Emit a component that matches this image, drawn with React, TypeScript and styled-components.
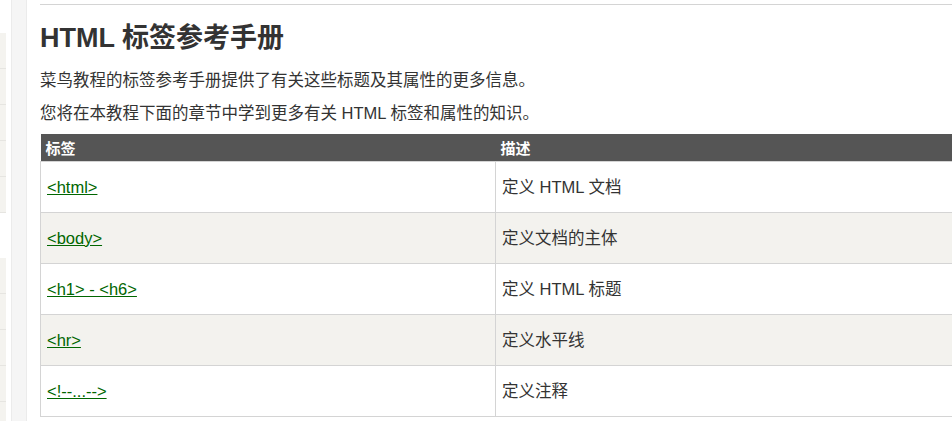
import React from 'react';
import styled, { createGlobalStyle } from 'styled-components';

const TEXT_COLOR = '#333333';
const BORDER_COLOR = '#d4d4d4';
const STRIPE_COLOR = '#f3f2ee';
const LINK_COLOR = '#006600';

const GlobalStyle = createGlobalStyle`
  html, body {
    margin: 0;
    padding: 0;
    background: #ffffff;
    overflow: hidden;
  }

  body {
    font-family: 'Liberation Sans', Arial, 'Noto Sans CJK SC', sans-serif;
    color: ${TEXT_COLOR};
  }
`;

const Page = styled.div`
  display: flex;
  align-items: flex-start;
  width: 952px;
  height: 421px;
  overflow: hidden;
`;

const SideMenu = styled.div`
  display: flex;
  flex-direction: column;
  gap: 45px;
  width: 6px;
  padding-top: 33px;
  flex-shrink: 0;
`;

const MenuGroup = styled.ul`
  list-style: none;
  margin: 0;
  padding: 0;
`;

const MenuItem = styled.li`
  height: 35px;
  background: #f4f3ef;
  border-bottom: 1px solid #e6e5e1;
`;

const Gutter = styled.div`
  width: 14px;
  height: 421px;
  margin-left: 5px;
  flex-shrink: 0;
  background: #f5f5f5;
  border-left: 1px solid #ebebeb;
  border-right: 1px solid #ebebeb;
`;

const Main = styled.main`
  flex: 1;
  min-width: 0;
  margin-left: 13px;
  margin-top: 4px;
  border-top: 1px solid ${BORDER_COLOR};
  overflow: hidden;
`;

const Title = styled.h1`
  margin: 15px 0 12px;
  font-size: 27px;
  line-height: 36px;
  font-weight: bold;
  color: ${TEXT_COLOR};
`;

const Paragraph = styled.p`
  margin: 0 0 9px;
  font-size: 16.5px;
  line-height: 24px;
`;

const RefTable = styled.table`
  width: 960px;
  border-collapse: collapse;
  font-size: 16.5px;
`;

const HeadCell = styled.th<{ $width?: number }>`
  width: ${p => (p.$width ? `${p.$width}px` : 'auto')};
  height: 27px;
  padding: 0 5px;
  background: #555555;
  color: #ffffff;
  font-size: 15px;
  font-weight: bold;
  text-align: left;
  box-sizing: border-box;
`;

const Row = styled.tr<{ $striped: boolean }>`
  background: ${p => (p.$striped ? STRIPE_COLOR : '#ffffff')};
`;

const Cell = styled.td`
  height: 51px;
  padding: 0 6px;
  border: 1px solid ${BORDER_COLOR};
  line-height: 24px;
  box-sizing: border-box;
`;

const TagLink = styled.a`
  color: ${LINK_COLOR};
  text-decoration: underline;
`;

const TAGS = [
  { tag: '<html>', desc: '定义 HTML 文档' },
  { tag: '<body>', desc: '定义文档的主体' },
  { tag: '<h1> - <h6>', desc: '定义 HTML 标题' },
  { tag: '<hr>', desc: '定义水平线' },
  { tag: '<!--...-->', desc: '定义注释' },
];

const App = () => (
  <>
    <GlobalStyle />
    <Page>
      <SideMenu>
        <MenuGroup>
          {[0, 1, 2, 3, 4].map(item => (
            <MenuItem key={item} />
          ))}
        </MenuGroup>
        <MenuGroup>
          {[0, 1, 2, 3, 4].map(item => (
            <MenuItem key={item} />
          ))}
        </MenuGroup>
      </SideMenu>
      <Gutter />
      <Main>
        <Title>HTML 标签参考手册</Title>
        <Paragraph>菜鸟教程的标签参考手册提供了有关这些标题及其属性的更多信息。</Paragraph>
        <Paragraph>您将在本教程下面的章节中学到更多有关 HTML 标签和属性的知识。</Paragraph>
        <RefTable>
          <thead>
            <tr>
              <HeadCell $width={455}>标签</HeadCell>
              <HeadCell>描述</HeadCell>
            </tr>
          </thead>
          <tbody>
            {TAGS.map((item, index) => (
              <Row key={item.tag} $striped={index % 2 === 1}>
                <Cell>
                  <TagLink href="#">{item.tag}</TagLink>
                </Cell>
                <Cell>{item.desc}</Cell>
              </Row>
            ))}
          </tbody>
        </RefTable>
      </Main>
    </Page>
  </>
);

export default App;
